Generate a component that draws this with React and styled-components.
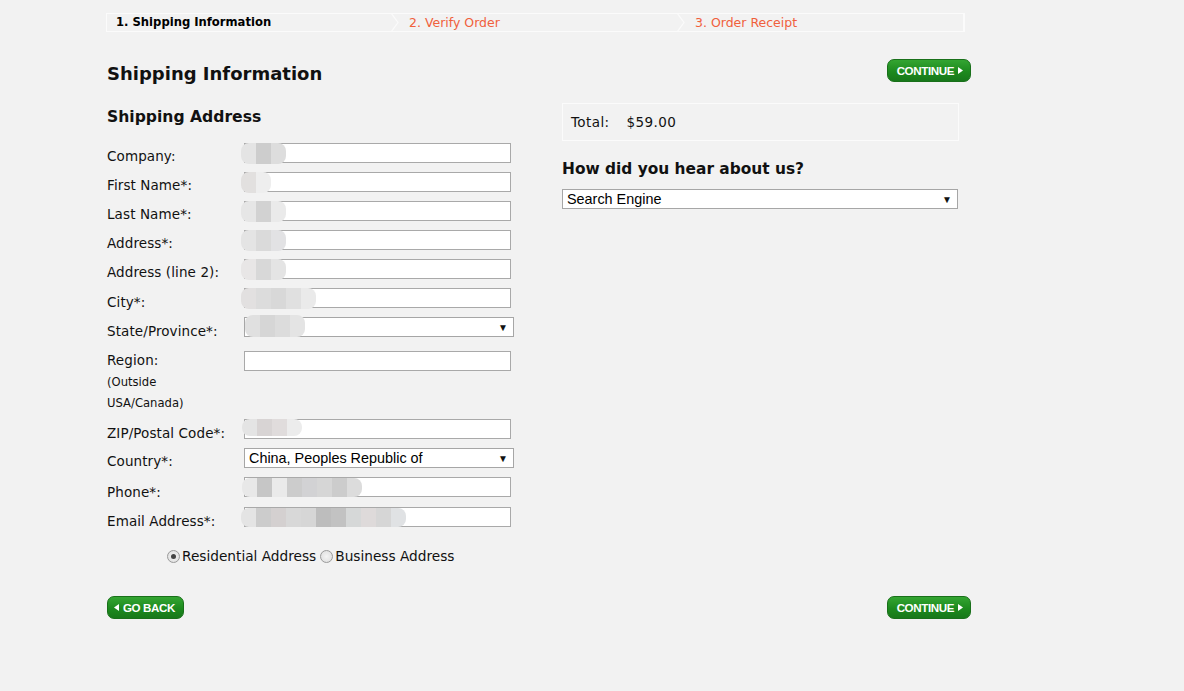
import React from "react";
import styled, { createGlobalStyle } from "styled-components";

const Global = createGlobalStyle`
  html, body { margin: 0; padding: 0; background: #f2f2f2; }
  body { font-family: "DejaVu Sans", Verdana, sans-serif; color: #111; }
`;

const Page = styled.div`
  width: 864px;
  padding: 13px 0 40px 107px;
`;

const Steps = styled.div`
  display: flex;
  width: 856px;
  height: 17px;
  border: 1px solid #fbfbfb;
  border-right-width: 2px;
  margin-left: -1px;
  position: relative;
`;

const Step = styled.div`
  position: relative;
  display: flex;
  align-items: center;
  flex: 0 0 ${(p) => p.$w}px;
  padding-left: ${(p) => p.$pl}px;
  padding-bottom: 1px;
  box-sizing: border-box;
  font-size: ${(p) => (p.$active ? 11.6 : 12.5)}px;
  font-weight: ${(p) => (p.$active ? 700 : 400)};
  color: ${(p) => (p.$active ? "#000" : "#f0603c")};
  white-space: nowrap;
`;

const Chevron = styled.svg`
  position: absolute;
  right: -2px;
  top: -1px;
`;

const TitleRow = styled.div`
  display: flex;
  justify-content: space-between;
  align-items: flex-start;
  margin-top: 27px;
`;

const H1 = styled.h1`
  margin: 4px 0 0;
  font-size: 18px;
  line-height: 22px;
  font-weight: 700;
  color: #111;
`;

const GreenButton = styled.button`
  display: inline-flex;
  align-items: center;
  gap: 4px;
  height: 23px;
  padding: 0 ${(p) => (p.$back ? 8 : 7)}px 0 ${(p) => (p.$back ? 6 : 9)}px;
  border-radius: 7px;
  border: 1px solid #19701a;
  background: linear-gradient(#34a532, #1d8a1e 55%, #17781a);
  color: #fff;
  font-family: "Liberation Sans", Arial, sans-serif;
  font-weight: 700;
  font-size: 11.6px;
  letter-spacing: -0.4px;
  cursor: pointer;
  box-sizing: border-box;
`;

const Columns = styled.div`
  display: grid;
  grid-template-columns: 455px 1fr;
  margin-top: 6px;
`;

const H2 = styled.h2`
  margin: 17px 0 17px;
  font-size: 15.6px;
  line-height: 18px;
  font-weight: 700;
  color: #111;
`;

const Form = styled.div`
  display: flex;
  flex-direction: column;
`;

const Row = styled.div`
  display: grid;
  grid-template-columns: 137px 270px;
  height: ${(p) => p.$h || 29}px;
  align-items: start;
  position: relative;
`;

const Label = styled.div`
  font-size: 13.5px;
  line-height: 16px;
  color: #111;
  padding-top: ${(p) => p.$pt ?? 5}px;
  white-space: nowrap;
  letter-spacing: 0.1px;
`;

const Note = styled.div`
  font-size: 11.6px;
  line-height: 21px;
  color: #111;
  margin-top: 4px;
`;

const Input = styled.input`
  display: block;
  width: 267px;
  height: 20px;
  box-sizing: border-box;
  border: 1px solid #a9a9a9;
  background: #fff;
  margin: 0;
  padding: 0 4px;
`;

const SelectBox = styled.div`
  width: ${(p) => p.$w}px;
  height: 20px;
  box-sizing: border-box;
  border: 1px solid #a6a6a6;
  background: #fff;
  display: flex;
  align-items: center;
  justify-content: space-between;
  padding: 0 5px 0 4px;
  font-family: "Liberation Sans", Arial, sans-serif;
  font-size: 14.4px;
  color: #000;
`;

const Arrow = styled.span`
  font-size: 10px;
  color: #111;
`;

const Redact = styled.div`
  position: absolute;
  left: ${(p) => p.$x}px;
  top: ${(p) => p.$y}px;
  display: flex;
  height: ${(p) => p.$h || 18}px;
  border-radius: 8px;
  overflow: hidden;
  filter: blur(0.6px);
`;

const Pix = styled.span`
  width: 15px;
  height: 100%;
  background: ${(p) => p.$c};
`;

const Radios = styled.div`
  display: flex;
  align-items: center;
  margin: 21px 0 0 60px;
  font-size: 13.7px;
  color: #111;
`;

const RadioLabel = styled.label`
  display: inline-flex;
  align-items: center;
  margin-right: 4px;
`;

const RadioDot = styled.span`
  width: 11px;
  height: 11px;
  border-radius: 50%;
  border: 1px solid #9a9a9a;
  background: radial-gradient(#f4f4f4, #dcdcdc);
  display: inline-flex;
  align-items: center;
  justify-content: center;
  margin-right: 2px;
  &::after {
    content: "";
    width: 5px;
    height: 5px;
    border-radius: 50%;
    background: ${(p) => (p.$on ? "#444" : "transparent")};
  }
`;

const Right = styled.div`
  padding-top: 12px;
`;

const TotalBox = styled.div`
  width: 397px;
  height: 38px;
  box-sizing: border-box;
  border: 1px solid #fbfbfb;
  display: flex;
  align-items: center;
  padding-left: 8px;
  font-size: 13.5px;
  color: #111;
  gap: 17px;
  letter-spacing: 0.4px;
`;

const H3 = styled.h3`
  margin: 19px 0 11px;
  font-size: 15.4px;
  line-height: 18px;
  font-weight: 700;
  color: #111;
`;

const Footer = styled.div`
  display: flex;
  justify-content: space-between;
  align-items: flex-start;
  margin-top: 32px;
`;

const Tri = ({ dir }) => (
  <svg width="5" height="7" viewBox="0 0 5 7">
    {dir === "left" ? <path d="M5 0V7L0 3.5Z" fill="#fff" /> : <path d="M0 0V7L5 3.5Z" fill="#fff" />}
  </svg>
);

const Blob = ({ x, y, colors, h }) => (
  <Redact $x={x} $y={y} $h={h}>
    {colors.map((c, i) => (
      <Pix key={i} $c={c} />
    ))}
  </Redact>
);

const fields = [
  { label: "Company:", blob: ["#e4e4e4", "#cdcdcd", "#dddddd"] },
  { label: "First Name*:", blob: ["#e2e0df", "#eeeeee"] },
  { label: "Last Name*:", blob: ["#e6e6e6", "#d2d2d2", "#eaeaea"] },
  { label: "Address*:", blob: ["#e4e4e4", "#dadada", "#e2e2e4"] },
  { label: "Address (line 2):", blob: ["#e8e6e6", "#d8d8d8", "#e4e4e4"] },
  { label: "City*:", pt: 6, blob: ["#e2e0e0", "#dcdcdc", "#d8d8d8", "#e0e0e0", "#eaeaea"] },
];

export default function App() {
  return (
    <>
      <Global />
      <Page>
        <Steps>
          <Step $w={290} $pl={9} $active>
            1. Shipping Information
            <Chevron width="8" height="19" viewBox="0 0 8 19">
              <path d="M0 0L7 9.5L0 19" fill="none" stroke="#fbfbfb" strokeWidth="1.2" />
            </Chevron>
          </Step>
          <Step $w={286} $pl={12}>
            2. Verify Order
            <Chevron width="8" height="19" viewBox="0 0 8 19">
              <path d="M0 0L7 9.5L0 19" fill="none" stroke="#fbfbfb" strokeWidth="1.2" />
            </Chevron>
          </Step>
          <Step $w={278} $pl={12}>
            3. Order Receipt
          </Step>
        </Steps>

        <TitleRow>
          <H1>Shipping Information</H1>
          <GreenButton>
            CONTINUE <Tri />
          </GreenButton>
        </TitleRow>

        <Columns>
          <div>
            <H2>Shipping Address</H2>
            <Form>
              {fields.map((f) => (
                <Row key={f.label}>
                  <Label $pt={f.pt}>{f.label}</Label>
                  <div>
                    <Input />
                  </div>
                  <Blob x={134} y={0} colors={f.blob} h={21} />
                </Row>
              ))}
              <Row $h={34}>
                <Label $pt={6}>State/Province*:</Label>
                <div>
                  <SelectBox $w={270}>
                    <span />
                    <Arrow>▼</Arrow>
                  </SelectBox>
                </div>
                <Blob x={138} y={-2} colors={["#e0e0e0", "#d6d6d6", "#dcdcdc", "#e4e4e4"]} h={22} />
              </Row>
              <Row $h={68}>
                <div>
                  <Label $pt={1}>Region:</Label>
                  <Note>
                    (Outside
                    <br />
                    USA/Canada)
                  </Note>
                </div>
                <div>
                  <Input />
                </div>
              </Row>
              <Row>
                <Label $pt={6}>ZIP/Postal Code*:</Label>
                <div>
                  <Input />
                </div>
                <Blob x={135} y={0} colors={["#e4e4e4", "#d8d4d4", "#e0dcdc", "#ececec"]} h={17} />
              </Row>
              <Row>
                <Label $pt={5}>Country*:</Label>
                <div>
                  <SelectBox $w={270}>
                    <span>China, Peoples Republic of</span>
                    <Arrow>▼</Arrow>
                  </SelectBox>
                </div>
              </Row>
              <Row $h={30}>
                <Label $pt={7}>Phone*:</Label>
                <div>
                  <Input />
                </div>
                <Blob
                  x={135}
                  y={1}
                  colors={["#e8e8e8", "#c6c6c6", "#eaeaea", "#cccccc", "#d2d2d4", "#d6d6d6", "#cccccc", "#dcdcdc"]}
                  h={19}
                />
              </Row>
              <Row $h={20}>
                <Label $pt={6}>Email Address*:</Label>
                <div>
                  <Input />
                </div>
                <Blob
                  x={134}
                  y={1}
                  colors={[
                    "#e4e4e4",
                    "#cccccc",
                    "#d4d0d0",
                    "#d8d8d8",
                    "#d6d6d6",
                    "#bdbdbd",
                    "#c2c2c2",
                    "#d6d8d8",
                    "#dedada",
                    "#d6d6d6",
                    "#e0e2e4",
                  ]}
                  h={19}
                />
              </Row>
            </Form>
            <Radios>
              <RadioLabel>
                <RadioDot $on />
                Residential Address
              </RadioLabel>
              <RadioLabel>
                <RadioDot />
                Business Address
              </RadioLabel>
            </Radios>
          </div>
          <Right>
            <TotalBox>
              <span>Total:</span>
              <span>$59.00</span>
            </TotalBox>
            <H3>How did you hear about us?</H3>
            <SelectBox $w={396}>
              <span>Search Engine</span>
              <Arrow>▼</Arrow>
            </SelectBox>
          </Right>
        </Columns>

        <Footer>
          <GreenButton $back>
            <Tri dir="left" /> GO BACK
          </GreenButton>
          <GreenButton>
            CONTINUE <Tri />
          </GreenButton>
        </Footer>
      </Page>
    </>
  );
}
